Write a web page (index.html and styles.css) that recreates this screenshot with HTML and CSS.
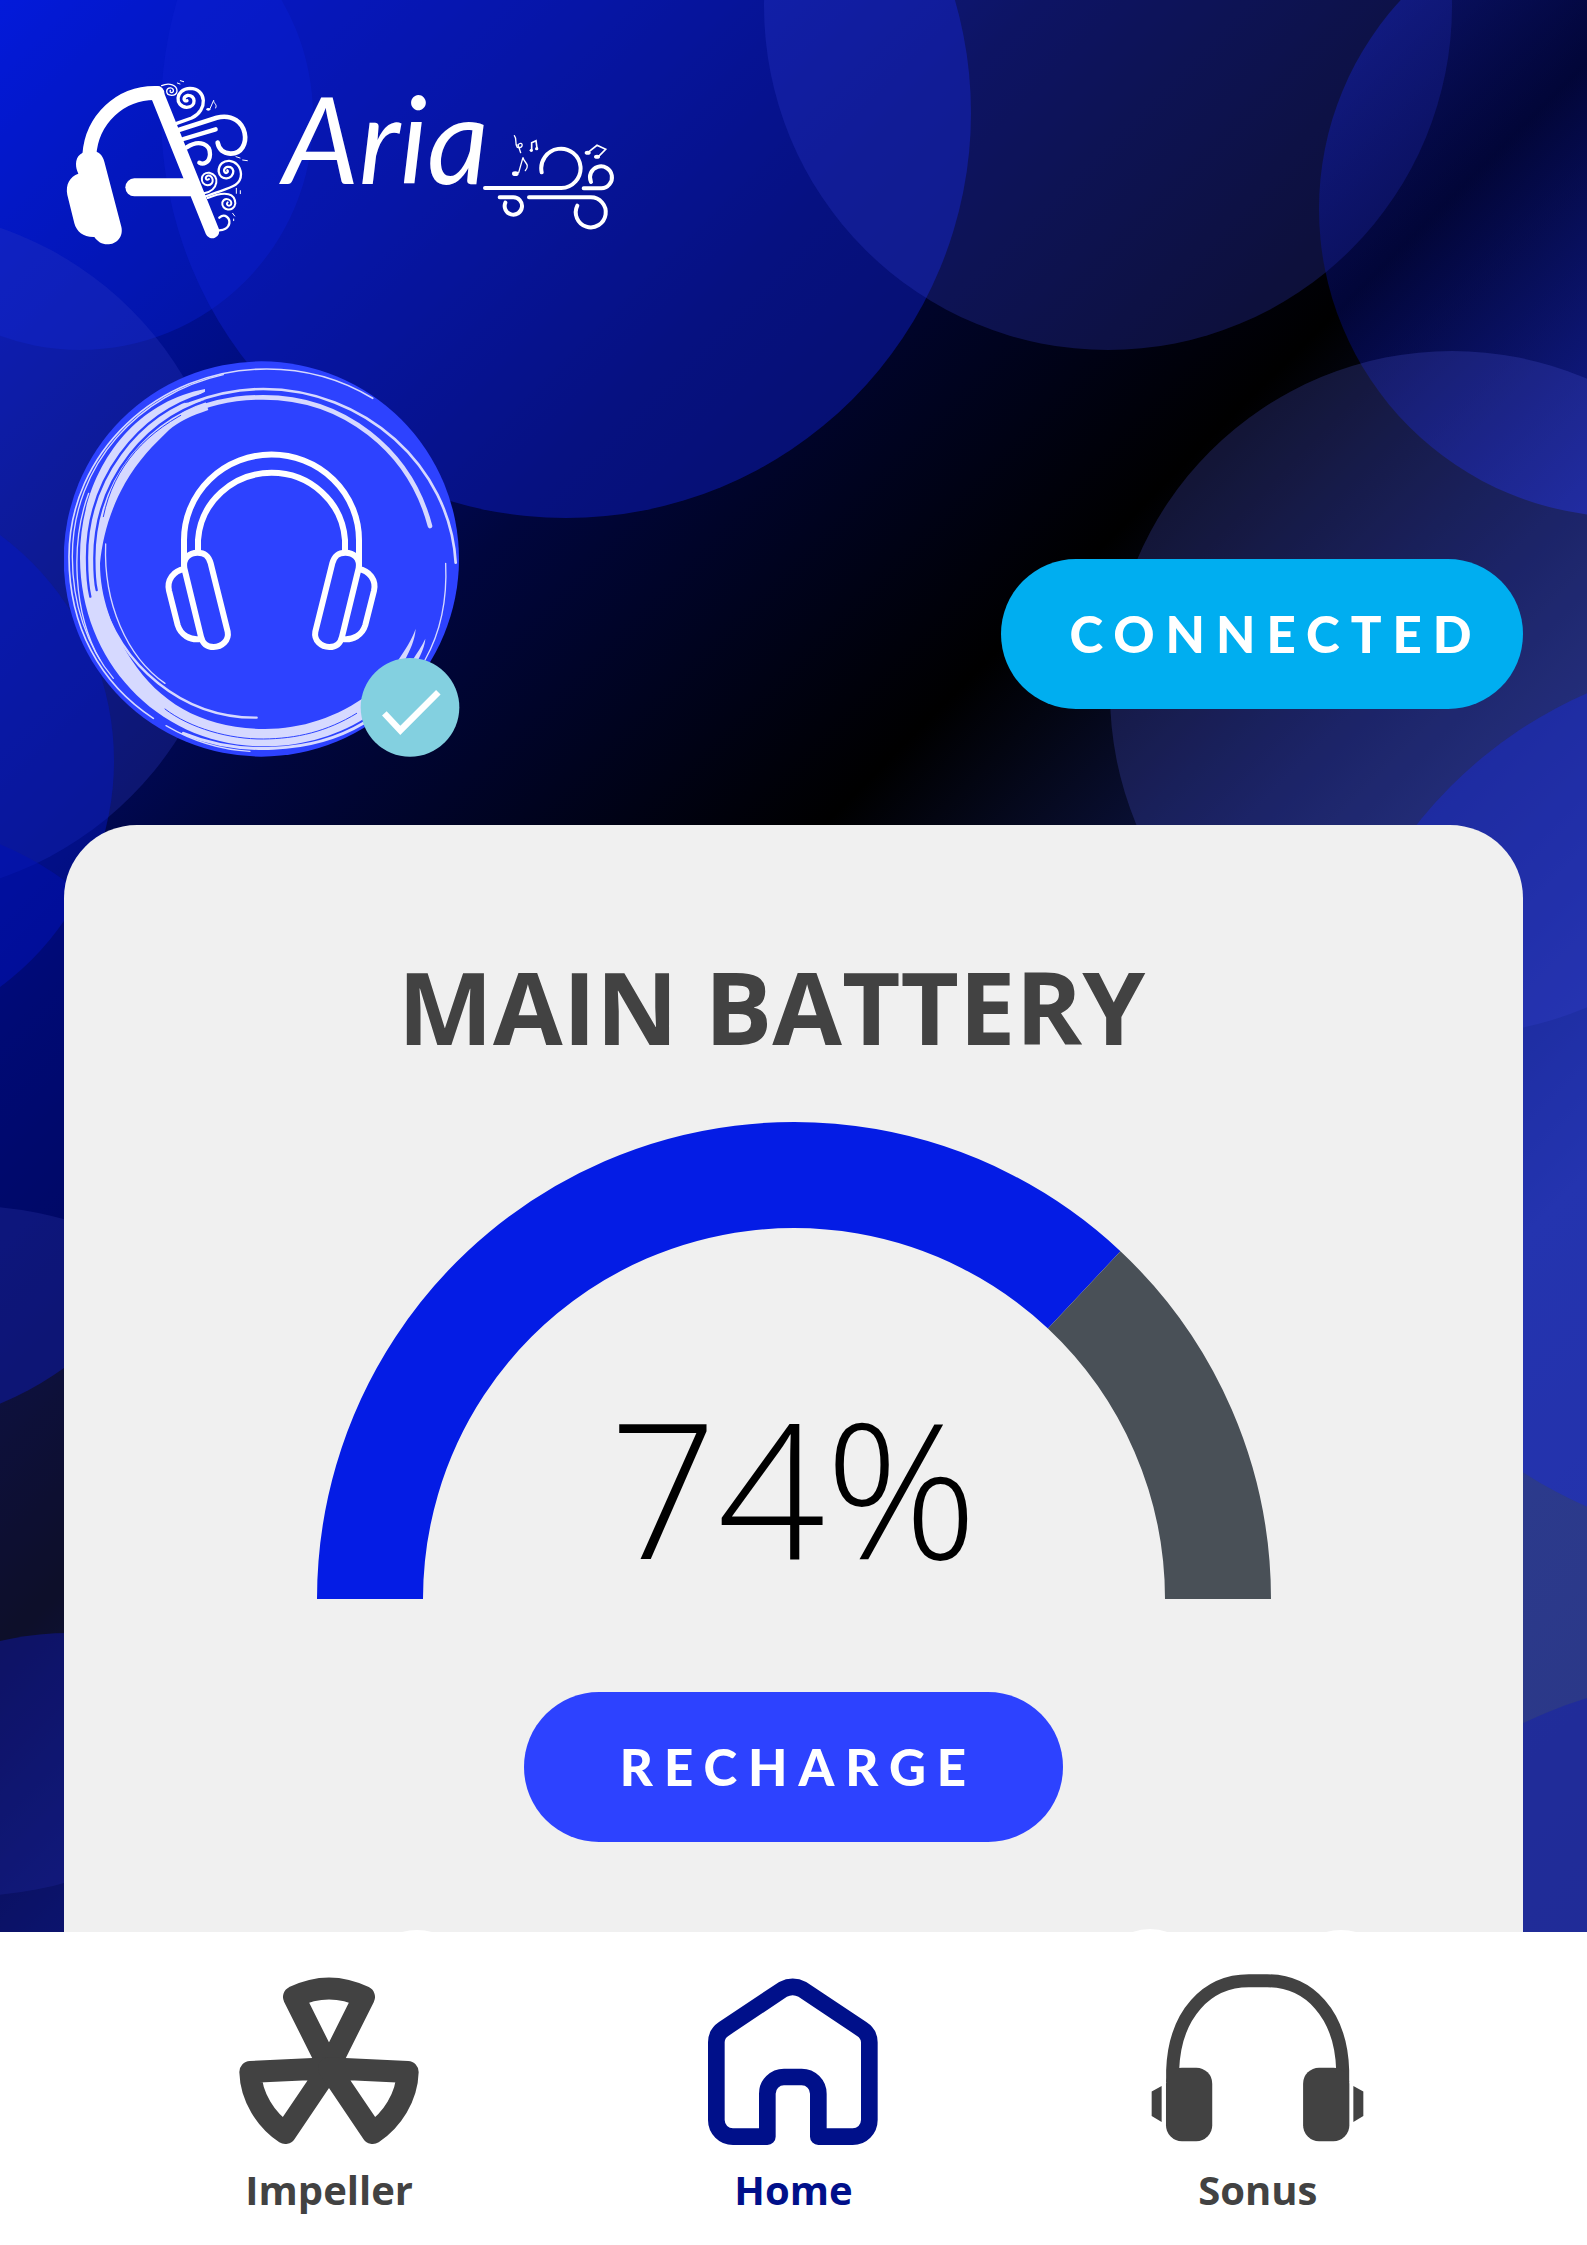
FILE: index.html
```html
<!DOCTYPE html>
<html lang="en">
<head>
<meta charset="utf-8">
<meta name="viewport" content="width=device-width, initial-scale=1">
<title>Aria – Home</title>
<link rel="stylesheet" href="styles.css">
</head>
<body>
<svg class="backdrop" viewBox="0 0 1587 2245" preserveAspectRatio="xMidYMin slice" aria-hidden="true">
  <defs>
    <linearGradient id="rim" x1="0" y1="0" x2="1" y2="1">
      <stop offset="0" stop-color="#2334e0" stop-opacity=".5"/>
      <stop offset=".35" stop-color="#0510a0" stop-opacity=".35"/>
      <stop offset=".75" stop-color="#1a28c8" stop-opacity=".6"/>
    </linearGradient>
  </defs>
  <circle cx="80" cy="117" r="233" fill="#0a24e8" fill-opacity=".3"/>
  <circle cx="566" cy="113" r="405" fill="#0e20d0" fill-opacity=".45"/>
  <circle cx="1108" cy="6" r="344" fill="#3440d8" fill-opacity=".25"/>
  <circle cx="1627" cy="209" r="308" fill="url(#rim)"/>
  <circle cx="1452" cy="693" r="342" fill="#5058d8" fill-opacity=".24"/>
  <circle cx="1765" cy="1100" r="444" fill="#1c2cd0" fill-opacity=".48"/>
  <circle cx="1720" cy="2130" r="452" fill="#1420b0" fill-opacity=".45"/>
  <circle cx="-112" cy="553" r="344" fill="#2c38c0" fill-opacity=".3"/>
  <circle cx="-167" cy="761" r="281" fill="#0418c8" fill-opacity=".45"/>
  <circle cx="-114" cy="1124" r="302" fill="#0010b8" fill-opacity=".45"/>
  <circle cx="-30" cy="1551" r="345" fill="#3c44c0" fill-opacity=".22"/>
  <circle cx="70" cy="1943" r="310" fill="#1018b0" fill-opacity=".45"/>
</svg>

<header class="brand">
  <svg class="brand-mark" viewBox="42 42 561 519" fill="none" stroke="#fff" stroke-linecap="round" aria-hidden="true">
    <path d="M118 285C125 180 210 95 322 99" stroke-width="42"/>
    <path d="M78 312C78 288 95 273 125 273C145 273 158 285 163 305L214 500C221 530 200 553 172 553C155 553 143 545 133 531C100 532 80 515 73 490L52 405C46 372 60 350 85 341C80 330 78 322 78 312Z" fill="#fff" stroke="none"/>
    <path d="M320 99L487 514" stroke-width="42"/>
    <path d="M253 382H420" stroke-width="54"/>
    <path d="M335 77C358 66 382 76 381 94C378 110 350 110 350 93C352 79 373 82 370 94C366 101 358 97 361 91" stroke-width="4"/>
    <path d="M380 190L425 174C475 150 470 86 420 85C375 87 373 140 410 142C442 140 436 104 413 106C396 112 402 126 411 122" stroke-width="10"/>
    <path d="M388 209L500 173C600 150 610 283 541 281C518 279 506 265 503 248" stroke-width="14"/>
    <path d="M400 237L497 208M410 262C450 236 481 255 480 283C479 310 458 314 448 308" stroke-width="13"/>
    <path d="M462 400C507 392 510 344 478 338C450 336 448 373 473 376C497 374 489 343 473 347C463 353 468 364 477 357" stroke-width="6"/>
    <path d="M465 410C530 383 573 384 573 342C570 292 506 290 506 334C510 364 551 360 550 333C544 312 517 321 523 335C528 343 537 336 532 331" stroke-width="7"/>
    <path d="M473 414C530 390 555 402 556 430C552 459 513 451 517 427C524 410 549 418 543 434C537 441 526 434 533 427" stroke-width="6"/>
    <path d="M508 473C525 458 540 475 538 490C535 505 520 511 507 511" stroke-width="7"/>
    <path d="M480 146L491 121C490 131 503 132 497 144M391 62L401 65M382 69L390 72M558 290L570 294M578 300L592 302M559 385V400M571 392V401M548 460L554 468M551 477V482" stroke-width="3"/>
    <ellipse cx="475" cy="148" rx="6" ry="4" fill="#fff" stroke="none"/>
  </svg>
  <span class="brand-name">Aria</span>
  <svg class="brand-wind" viewBox="642 42 399 519" fill="none" stroke="#fff" stroke-width="12" stroke-linecap="round" aria-hidden="true">
    <path d="M648 384H877A59 59 0 1 0 818 337"/>
    <path d="M944 385H997A33 33 0 1 0 966 366"/>
    <path d="M780 412H965A45 45 0 1 1 925 437"/>
    <path d="M692 412H733A26 26 0 1 1 709 428"/>
    <path d="M749 338L762 292C764 308 785 312 769 332" stroke-width="4"/>
    <path d="M960 275L984 256L1010 268L989 289M788 268L788 248L801 242L804 265" stroke-width="5"/>
    <path d="M736 227C746 240 735 246 745 262C766 268 762 240 747 254L755 278" stroke-width="4"/>
    <g fill="#fff" stroke="none">
      <ellipse cx="739" cy="341" rx="10" ry="7"/><ellipse cx="956" cy="278" rx="9" ry="6"/><ellipse cx="984" cy="290" rx="9" ry="6"/>
      <circle cx="787" cy="271" r="5"/><circle cx="803" cy="266" r="5"/>
    </g>
  </svg>
</header>

<main class="content">
  <section class="device" aria-label="Device">
    <svg class="device-avatar" viewBox="42 33 1188 1188" fill="none" role="img" aria-label="Headphones, ready">
      <circle cx="634" cy="627" r="593" fill="#2d42ff"/>
      <path d="M465 117C235 160 88 380 90 625C92 940 330 1188 640 1189C760 1190 870 1155 960 1095L960 1030C860 1105 750 1138 640 1137C460 1135 330 1060 245 930C185 840 150 740 150 640C158 560 180 480 225 400C265 330 310 285 357 240C385 215 425 197 475 180L465 150L400 160L465 125Z" fill="#d6d9ff"/>
      <g stroke="#2d42ff" stroke-linecap="round">
        <path d="M468 131C260 190 110 390 111 625C111 680 114 710 121 740" stroke-width="7"/>
        <path d="M520 138C290 190 133 390 133 625C133 680 135 700 140 720" stroke-width="7"/>
        <path d="M440 172C290 240 190 350 160 500" stroke-width="3"/>
        <path d="M345 1077C420 1135 540 1168 640 1167C740 1166 830 1145 920 1090" stroke-width="3"/>
        <path d="M94 740C110 850 140 910 195 985" stroke-width="3"/>
      </g>
      <g stroke="#d6d9ff" stroke-linecap="round">
        <path d="M968 145C870 85 760 57 650 57C320 57 57 310 57 620C57 830 150 1000 310 1105" stroke-width="5"/>
        <path d="M520 74C270 130 67 340 67 620C67 760 110 890 190 985" stroke-width="4"/>
        <path d="M116 430C60 580 70 790 150 930" stroke-width="4"/>
        <path d="M1217 638C1200 345 940 117 640 117C560 117 480 137 420 160" stroke-width="8"/>
        <path d="M1140 528C1080 300 880 142 640 142C540 142 460 165 400 195" stroke-width="14"/>
        <path d="M167 582C160 760 230 920 345 1000" stroke-width="4"/>
        <path d="M150 730C210 950 400 1105 620 1103" stroke-width="7"/>
        <path d="M1187 640C1192 750 1170 850 1125 930" stroke-width="4"/>
        <path d="M400 1150C560 1215 780 1215 940 1120" stroke-width="9"/>
        <path d="M348 1127C430 1175 520 1200 600 1204" stroke-width="4"/>
      </g>
      <path d="M1097 836C1085 870 1065 900 1045 930H1065C1080 900 1095 870 1097 836ZM1126 866C1115 890 1100 910 1088 930H1104C1115 910 1125 885 1126 866Z" fill="#d6d9ff"/>
      <g stroke="#fff" stroke-width="18">
        <path d="M402 650V570A262 256 0 0 1 927 570V650M444 605V570A221 216 0 0 1 885 570V605"/>
        <g id="cup"><path d="M403 655C398 625 418 608 443 608C465 608 476 618 482 640L533 845C538 872 515 891 491 891C468 891 458 880 453 860Z"/><path d="M404 657C370 662 350 690 357 722L383 825C392 855 420 872 452 867"/></g>
        <use href="#cup" transform="translate(1329 0) scale(-1 1)"/>
      </g>
      <circle cx="1080" cy="1072" r="148" fill="#83d0e0"/>
      <path d="M1003 1090L1051 1141L1165 1027" stroke="#fff" stroke-width="19"/>
    </svg>
    <button class="pill pill-status" type="button">CONNECTED</button>
  </section>

  <section class="card" aria-labelledby="battery-title">
    <h1 class="card-title" id="battery-title">MAIN BATTERY</h1>
    <div class="gauge">
      <svg class="gauge-arc" viewBox="0 0 954 477" fill="none" stroke-width="106" aria-hidden="true">
        <path d="M53 477A424 424 0 0 1 767.2 167.9" stroke="#041ce5"/>
        <path d="M767.2 167.9A424 424 0 0 1 901 477" stroke="#495057"/>
      </svg>
      <p class="gauge-value">74%</p>
    </div>
    <button class="pill pill-action" type="button">RECHARGE</button>
  </section>
</main>

<nav class="tabs" aria-label="Main">
  <svg class="tabs-edge" viewBox="0 0 1587 3" fill="#fff" aria-hidden="true">
    <circle cx="417" cy="58" r="57"/><circle cx="1150" cy="52" r="52"/><circle cx="1341" cy="58" r="57"/>
  </svg>
  <a class="tab" href="#impeller">
    <svg class="tab-icon" viewBox="115 218 540 522" fill="none" stroke="currentColor" stroke-width="66" stroke-linejoin="round" aria-hidden="true">
      <path d="M385 500L280 290Q385 239 490 290Z"/>
      <path d="M385 504L149 515C151 590 196 660 254 698Z"/>
      <path d="M385 504L621 515C619 590 574 660 516 698Z"/>
    </svg>
    Impeller
  </a>
  <a class="tab tab-current" href="#home" aria-current="page">
    <svg class="tab-icon" viewBox="132 218 540 522" fill="none" stroke="currentColor" stroke-width="50" stroke-linejoin="round" aria-hidden="true">
      <path d="M325 709H222A50 50 0 0 1 172 659V426Q172 401 194 386L372 267Q401 252 430 267L608 386Q631 401 631 426V659A50 50 0 0 1 581 709H478V580A50 50 0 0 0 428 530H375A50 50 0 0 0 325 580Z"/>
    </svg>
    Home
  </a>
  <a class="tab" href="#sonus">
    <svg class="tab-icon tab-icon-wide" viewBox="151 218 640 522" fill="currentColor" aria-hidden="true">
      <path d="M216 545V510C222 340 320 241 445 241H500C625 241 722 340 727 510V545" fill="none" stroke="currentColor" stroke-width="39"/>
      <rect x="196" y="502" width="139" height="221" rx="48"/>
      <rect x="608" y="502" width="139" height="221" rx="48"/>
      <path d="M153 574L183 557V665L153 647ZM759 557L789 574V647L759 665Z"/>
    </svg>
    Sonus
  </a>
</nav>
</body>
</html>
```
FILE: styles.css
```css
* {
  box-sizing: border-box;
}

body {
  position: relative;
  display: flex;
  flex-direction: column;
  min-height: 100vh;
  margin: 0;
  background: linear-gradient(135deg, #0016d4 0%, #000e86 15%, #00063e 27%, #000000 43%, #0c1444 54%, #2c3c90 72%, #2a3480 100%);
  color: #424242;
  font-family: "Open Sans", "Noto Sans", sans-serif;
}

.backdrop {
  position: absolute;
  inset: 0;
  z-index: -1;
  width: 100%;
  height: 100%;
}

.brand {
  display: flex;
  align-items: flex-start;
  padding: 74px 64px 0;
}

.brand-mark {
  width: 187px;
  height: 173px;
}

.brand-name {
  width: 200px;
  margin-left: 32px;
  color: #fff;
  font-family: Lato, sans-serif;
  font-size: 120px;
  font-style: italic;
  line-height: 128px;
}

.brand-wind {
  width: 133px;
  height: 173px;
}

.content {
  display: flex;
  flex: 1;
  flex-direction: column;
  padding: 114px 64px 0;
}

.device {
  display: flex;
  align-items: flex-end;
  justify-content: space-between;
}

.device-avatar {
  width: 396px;
  height: 396px;
}

.pill {
  height: 150px;
  border: 0;
  border-radius: 75px;
  color: #fff;
  font-family: Lato, sans-serif;
  font-size: 51px;
  font-weight: 900;
  letter-spacing: 11px;
  cursor: pointer;
}

.pill-status {
  width: 522px;
  margin-bottom: 48px;
  padding: 0 0 2px 28px;
  background: #00aef0;
}

.pill-action {
  width: 539px;
  padding: 0 0 2px 10px;
  background: #2d42ff;
}

.card {
  display: flex;
  flex: 1;
  flex-direction: column;
  align-items: center;
  margin-top: 68px;
  padding: 121px 36px 90px;
  border-radius: 73px 73px 0 0;
  background: #f0f0f0;
}

.card-title {
  margin: 0 0 56px;
  padding-right: 44px;
  font-size: 101px;
  font-weight: 700;
  line-height: 120px;
}

.gauge {
  display: grid;
  width: 100%;
  max-width: 954px;
  margin-bottom: 93px;
}

.gauge-arc {
  grid-area: 1 / 1;
  width: 100%;
}

.gauge-value {
  grid-area: 1 / 1;
  place-self: end center;
  margin: 0 0 18px;
  color: #000;
  font-size: 189px;
  font-weight: 300;
  line-height: 190px;
}

.tabs {
  position: relative;
  display: grid;
  grid-template-columns: repeat(3, 1fr);
  padding: 41px 97px 27px;
  background: #fff;
}

.tabs-edge {
  position: absolute;
  bottom: 100%;
  left: 0;
  width: 100%;
}

.tab {
  display: flex;
  flex-direction: column;
  align-items: center;
  gap: 15px;
  color: #424242;
  font-size: 40px;
  font-weight: 700;
  line-height: 56px;
  text-decoration: none;
}

.tab-current {
  color: #00108a;
}

.tab-icon {
  width: 180px;
  height: 174px;
}

.tab-icon-wide {
  width: 213px;
}
```
